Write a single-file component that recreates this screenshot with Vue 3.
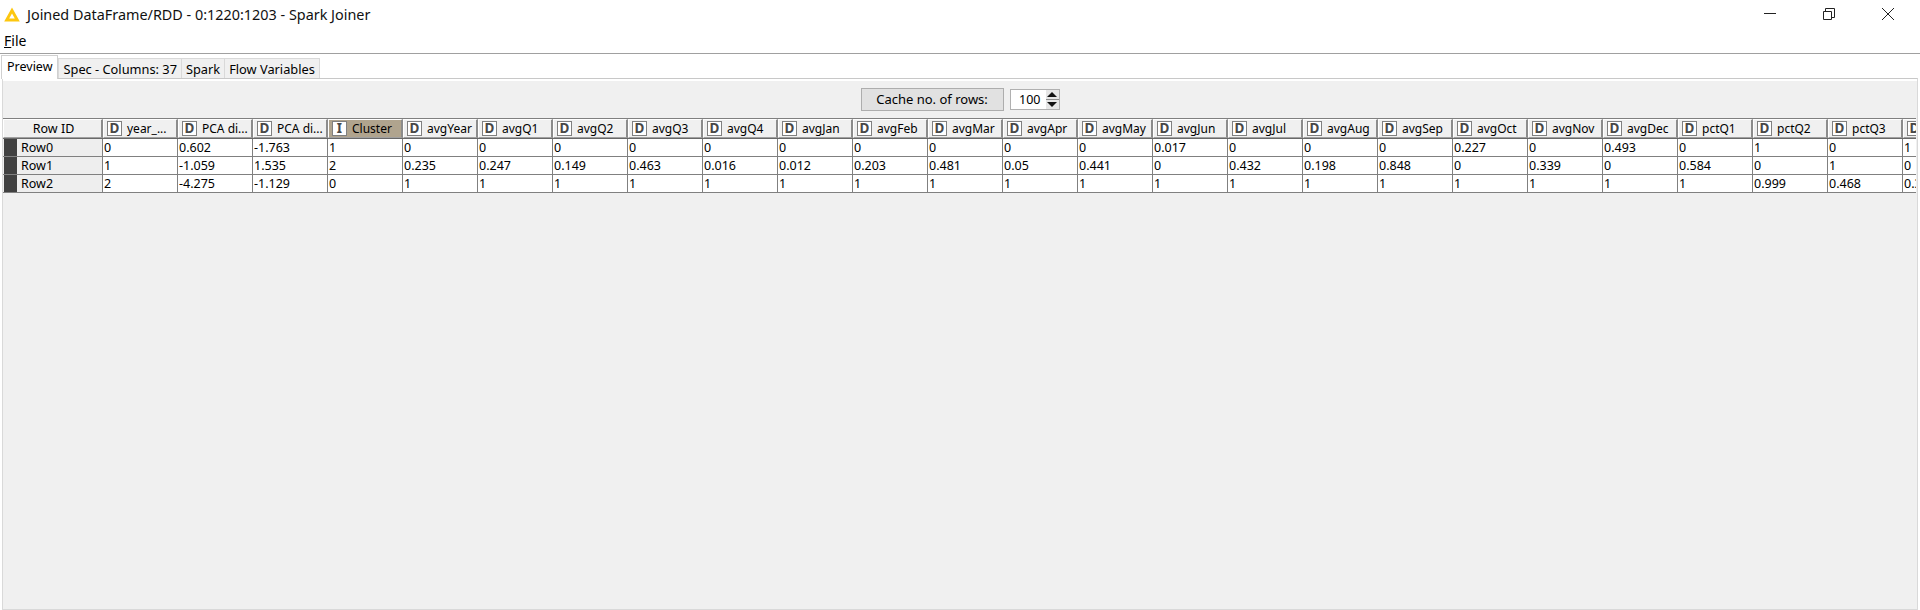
<template>
  <div class="window">
    <header class="title-bar">
      <svg class="app-icon" width="16" height="15" viewBox="0 0 16 15">
        <path d="M8 0.5 L15.8 14.5 L0.2 14.5 Z M8 6.5 L5.2 11.5 L10.8 11.5 Z" fill="#fdc70f" fill-rule="evenodd" />
      </svg>
      <span class="title-text">Joined DataFrame/RDD - 0:1220:1203 - Spark Joiner</span>
      <div class="window-controls">
        <svg width="12" height="12" viewBox="0 0 12 12"><path d="M0 5.5H12" stroke="#222" fill="none" /></svg>
        <svg width="12" height="12" viewBox="0 0 12 12"><path d="M0.5 3.5H8.5V11.5H0.5Z M2.5 3.5V0.5H11.5V9.5H8.5" stroke="#222" fill="none" /></svg>
        <svg width="12" height="12" viewBox="0 0 12 12"><path d="M0 0L12 12M12 0L0 12" stroke="#222" fill="none" /></svg>
      </div>
    </header>

    <nav class="menu-bar"><span class="menu-item"><u>F</u>ile</span></nav>

    <div class="tabs">
      <div
        v-for="(tab, i) in tabs"
        :key="tab"
        class="tab"
        :class="{ 'tab--active': i === 0 }"
      >
        {{ tab }}
      </div>
    </div>

    <main class="panel">
      <div class="toolbar">
        <div class="cache-label">Cache no. of rows:</div>
        <div class="spinner">
          <span class="spinner__value">100</span>
          <div class="spinner__arrows">
            <span class="arrow arrow--up"></span>
            <span class="arrow arrow--down"></span>
          </div>
        </div>
      </div>

      <div class="table">
        <div class="row row--head">
          <div class="head-cell head-cell--id">Row ID</div>
          <div
            v-for="col in columns"
            :key="col.key"
            class="head-cell"
            :class="{ 'head-cell--sorted': col.name === 'Cluster' }"
          >
            <span class="type-icon">{{ col.type }}</span>
            <span class="head-name">{{ col.name }}</span>
          </div>
        </div>
        <div v-for="row in rows" :key="row.id" class="row">
          <div class="id-cell">
            <span class="id-mark"></span>
            <span>{{ row.id }}</span>
          </div>
          <div v-for="(value, i) in row.values" :key="i" class="cell">{{ value }}</div>
        </div>
      </div>
    </main>
  </div>
</template>

<script setup>
const tabs = ['Preview', 'Spec - Columns: 37', 'Spark', 'Flow Variables']

const names = [
  'year_...', 'PCA di...', 'PCA di...', 'Cluster', 'avgYear',
  'avgQ1', 'avgQ2', 'avgQ3', 'avgQ4',
  'avgJan', 'avgFeb', 'avgMar', 'avgApr', 'avgMay', 'avgJun',
  'avgJul', 'avgAug', 'avgSep', 'avgOct', 'avgNov', 'avgDec',
  'pctQ1', 'pctQ2', 'pctQ3', ''
]

const columns = names.map((name, i) => ({
  key: i,
  name,
  type: name === 'Cluster' ? 'I' : 'D'
}))

const rows = [
  {
    id: 'Row0',
    values: ['0', '0.602', '-1.763', '1', '0', '0', '0', '0', '0', '0', '0', '0', '0', '0', '0.017', '0', '0', '0', '0.227', '0', '0.493', '0', '1', '0', '1']
  },
  {
    id: 'Row1',
    values: ['1', '-1.059', '1.535', '2', '0.235', '0.247', '0.149', '0.463', '0.016', '0.012', '0.203', '0.481', '0.05', '0.441', '0', '0.432', '0.198', '0.848', '0', '0.339', '0', '0.584', '0', '1', '0']
  },
  {
    id: 'Row2',
    values: ['2', '-4.275', '-1.129', '0', '1', '1', '1', '1', '1', '1', '1', '1', '1', '1', '1', '1', '1', '1', '1', '1', '1', '1', '0.999', '0.468', '0.3']
  }
]
</script>

<style>
html,
body {
  margin: 0;
  background: #fff;
}
</style>

<style scoped>
.window {
  width: 1920px;
  height: 610px;
  display: flex;
  flex-direction: column;
  overflow: hidden;
  background: #fff;
  color: #000;
  font-family: "Noto Sans", sans-serif;
  font-size: 12.5px;
}

.title-bar {
  height: 29px;
  display: flex;
  align-items: center;
  padding-left: 4px;
  flex: none;
}

.app-icon {
  margin-right: 7px;
}

.title-text {
  font-size: 14.4px;
  color: #111;
}

.window-controls {
  margin-left: auto;
  display: flex;
  gap: 47px;
  padding-right: 26px;
  margin-top: -1px;
}

.menu-bar {
  height: 24px;
  flex: none;
  border-bottom: 1px solid #a0a0a0;
  padding-left: 4px;
  font-size: 14px;
  line-height: 24px;
}

.tabs {
  height: 24px;
  flex: none;
  display: flex;
  align-items: flex-end;
  padding-left: 1px;
  background: #fff;
  position: relative;
  z-index: 1;
}

.tab {
  height: 19px;
  line-height: 20px;
  padding: 0 4px;
  background: #f0f0f0;
  border: 1px solid #d9d9d9;
  border-bottom: none;
  margin-left: -1px;
  font-size: 12.8px;
}

.tab:nth-child(2) {
  margin-left: 0;
}

.tab--active {
  height: 23px;
  line-height: 21px;
  background: #fff;
  margin-left: 0;
  padding: 0 5px;
  position: relative;
  margin-bottom: -1px;
  border-color: #d0d0d0;
  font-size: 12.5px;
}

.panel {
  flex: 1;
  margin: 0 2px;
  border: 1px solid #d9d9d9;
  border-top: 1px solid #c8c8c8;
  background: #f0f0f0;
  box-shadow: inset 0 2px 0 #fff;
  padding-top: 9px;
}

.toolbar {
  height: 22px;
  display: flex;
  justify-content: center;
  gap: 6px;
  margin-bottom: 8px;
  align-items: center;
}

.cache-label {
  width: 141px;
  height: 21px;
  line-height: 21px;
  text-align: center;
  background: #e1e1e1;
  border: 1px solid #adadad;
  font-size: 13px;
}

.spinner {
  width: 48px;
  height: 19px;
  display: flex;
  background: #fff;
  border: 1px solid #b0b0b0;
}

.spinner__value {
  flex: 1;
  text-align: right;
  line-height: 19px;
  padding-right: 4px;
}

.spinner__arrows {
  width: 13px;
  display: flex;
  flex-direction: column;
  background: #e6e6e6;
  border-left: 1px solid #fff;
}

.arrow {
  flex: 1;
  display: flex;
  align-items: center;
  justify-content: center;
}

.arrow--up {
  border-bottom: 1px solid #8c8c8c;
}

.arrow::after {
  content: "";
  border-left: 5px solid transparent;
  border-right: 5px solid transparent;
}

.arrow--up::after {
  border-bottom: 5px solid #111;
}

.arrow--down::after {
  border-top: 5px solid #111;
}

.table {
  width: 1913px;
  overflow: hidden;
  border-top: 1px solid #808080;
}

.row {
  height: 18px;
  display: flex;
  border-bottom: 1px solid #808080;
  box-sizing: border-box;
  background: #fff;
}

.row--head {
  height: 20px;
  border-bottom: 1px solid #696969;
  background: #eee;
}

.head-cell,
.cell {
  width: 75px;
  flex: none;
  box-sizing: border-box;
  border-right: 1px solid #808080;
  overflow: hidden;
  white-space: nowrap;
}

.head-cell {
  display: flex;
  align-items: center;
  gap: 5px;
  padding-left: 3px;
  padding-bottom: 1px;
  background: #f0f0f0;
  border-top: 1px solid #fff;
  border-left: 1px solid #fff;
  border-bottom: 1px solid #a0a0a0;
  border-right: 2px solid #8c8c8c;
  font-size: 12px;
}

.head-cell--id {
  width: 100px;
  justify-content: center;
  padding-left: 2px;
  font-size: 12.5px;
}

.head-cell--sorted {
  background: #b0a48e;
}

.type-icon {
  width: 15px;
  height: 15px;
  box-sizing: border-box;
  line-height: 13px;
  flex: none;
  text-align: center;
  background: #fff;
  border: 1px solid #808080;
  font-weight: 700;
  color: #484848;
  font-size: 13.5px;
}

.cell {
  line-height: 17px;
  padding-left: 1px;
}

.id-cell {
  width: 100px;
  flex: none;
  box-sizing: border-box;
  display: flex;
  align-items: center;
  gap: 4px;
  background: #eee;
  border-right: 1px solid #808080;
  padding-left: 1px;
}

.id-mark {
  width: 13px;
  height: 17px;
  background: #404040;
}
</style>
